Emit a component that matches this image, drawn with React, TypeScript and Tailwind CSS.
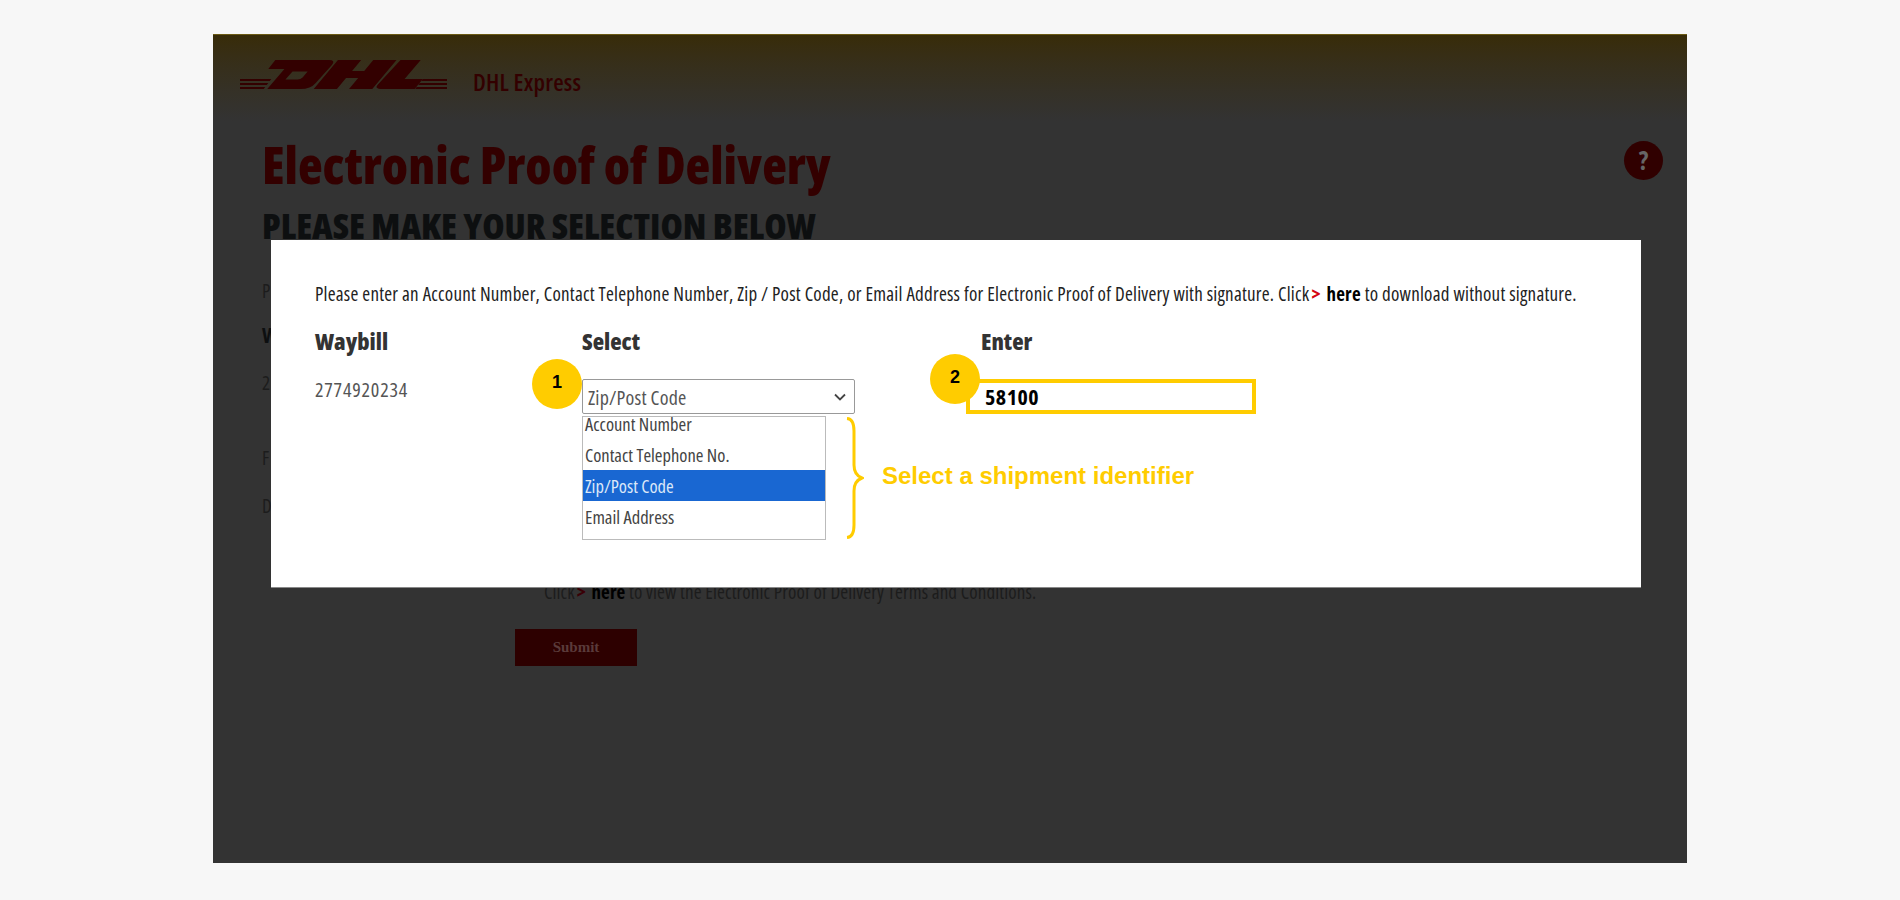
const sans = "font-['Open_Sans','Noto_Sans',sans-serif] font-stretch-[75%]";

const DhlLogo = () => (
    <svg viewBox="0 0 205 29" className="w-[207px] h-[29px] shrink-0" preserveAspectRatio="none" fill="#330000">
        <path fillRule="evenodd" d="M35 0 H88 Q95 0 91 5 L75 23 Q70 29 60 29 H27 L44 9 H28 Z M52 11.500 L45 19.500 H57 Q60 19.500 62 17.500 L67 11.500 Z" />
        <path d="M97 0 H120 L111 11 H123 L132 0 H155 L131 29 H108 L117 18 H105 L96 29 H73 Z" />
        <path d="M159 0 H179 L163 19 H181 L173 29 H141 Q132 29 137 24 Z" />
        <path d="M0 19 H31 L29.500 21 H0 Z M0 23 H28 L26.500 25 H0 Z M0 27 H25 L23.500 29 H0 Z" />
        <path d="M181 19 H205 V21 H179.500 Z M178 23 H205 V25 H176.500 Z M175 27 H205 V29 H173.500 Z" />
    </svg>
);

const Badge = ({ n, className }: { n: string; className: string }) => (
    <div className={`absolute w-[50px] h-[50px] rounded-full bg-[#ffcc00] flex items-center justify-center font-['Liberation_Sans',sans-serif] font-bold text-[18px] text-black ${className}`}>
        <span className="-mt-1">{n}</span>
    </div>
);

const options = ['Account Number', 'Contact Telephone No.', 'Zip/Post Code', 'Email Address'];

const Modal = () => (
    <div className="absolute left-[58px] top-[205px] w-[1370px] h-[348px] bg-white border-b border-[#888] px-[44px] pt-[43px]">
        <p className={`${sans} text-[19px] leading-[22px] tracking-[0.24px] text-[#222] whitespace-nowrap`}>
            Please enter an Account Number, Contact Telephone Number, Zip / Post Code, or Email Address for Electronic Proof of Delivery with signature. Click<span className="text-[#d40511] font-bold mx-[2px]">&gt;</span> <b className="text-black">here</b> to download without signature.
        </p>
        <div className="mt-[22px] flex relative">
            <div className="w-[267px] shrink-0">
                <div className={`${sans} font-extrabold text-[23.5px] leading-[28px] text-[#333]`}>Waybill</div>
                <div className={`${sans} text-[20px] leading-[24px] tracking-[0.8px] text-[#555] mt-[23px]`}>2774920234</div>
            </div>
            <div className="w-[399px] shrink-0">
                <div className={`${sans} font-extrabold text-[23.5px] leading-[28px] text-[#333]`}>Select</div>
                <div className="mt-[24px] w-[273px] h-[35px] border border-[#999] rounded-[2px] flex items-center justify-between pl-[5px] pr-[8px]">
                    <span className={`${sans} text-[20px] tracking-[0.2px] text-[#555] mt-[2px]`}>Zip/Post Code</span>
                    <svg viewBox="0 0 12 8" className="w-[12px] h-[8px]" fill="none" stroke="#444" strokeWidth="1.800">
                        <path d="M1 1.500 L6 6.500 L11 1.500" />
                    </svg>
                </div>
                <ul className="mt-[2px] w-[244px] h-[124px] border border-[#bbb] bg-white">
                    {options.map((o, i) => (
                        <li key={o} className={`h-[31px] pl-[2px] flex items-center ${sans} text-[18.500px] ${i === 0 ? '-mt-[9px]' : ''} ${i === 2 ? 'bg-[#1967d2] text-[#dce8f8]' : 'text-[#444]'}`}>
                            {o}
                        </li>
                    ))}
                </ul>
            </div>
            <div className="w-[290px] shrink-0">
                <div className={`${sans} font-extrabold text-[23.5px] leading-[28px] text-[#333]`}>Enter</div>
                <div className={`mt-[24px] -ml-[15px] w-[290px] h-[35px] border-[4px] border-[#ffcc00] flex items-center pl-[15px] ${sans} font-bold text-[22px] tracking-[0.5px] text-black`}>
                    58100
                </div>
            </div>
            <Badge n="1" className="left-[217px] top-[32px]" />
            <Badge n="2" className="left-[615px] top-[27px]" />
            <svg viewBox="0 0 18 122" className="absolute left-[531px] top-[90px] w-[18px] h-[122px]" fill="none" stroke="#ffcc00" strokeWidth="3">
                <path d="M1 1.500 Q8 2 8 14 V48 Q8 58 16 61 Q8 64 8 74 V108 Q8 120 1 120.500" />
            </svg>
            <div className="absolute left-[567px] top-[135px] font-['Liberation_Sans',sans-serif] font-bold text-[24px] leading-[28px] text-[#ffcc00] whitespace-nowrap">
                Select a shipment identifier
            </div>
        </div>
    </div>
);

export default function App() {
    return (
        <div className="min-h-[900px] bg-[#f7f7f7] pl-[213px] pt-[34px]">
            <div className="relative w-[1474px] h-[829px] bg-[#333] border-t border-[#6b5a14] overflow-hidden">
                <div className="h-[86px] bg-gradient-to-b from-[#382c08] to-[#333] pl-[27px] pt-[25px] flex items-start">
                    <DhlLogo />
                    <span className={`${sans} ml-[26px] mt-[10px] text-[24px] leading-[24px] tracking-[0.2px] font-semibold text-[#330000]`}>DHL Express</span>
                </div>
                <div className="relative px-[49px]">
                    <h1 className={`${sans} font-extrabold text-[51px] leading-[60px] text-[#330000] mt-[13px]`}>Electronic Proof of Delivery</h1>
                    <h2 className={`${sans} font-extrabold text-[36px] leading-[40px] text-[#0d0f10] mt-[12px]`}>PLEASE MAKE YOUR SELECTION BELOW</h2>
                    <div className={`${sans} text-[19px] text-[#1c1c1c]`}>
                        <p className="mt-[33px] leading-[24px]">P</p>
                        <p className="mt-[20px] leading-[24px] font-bold text-[21px] text-[#0d0f10]">W</p>
                        <p className="mt-[24px] leading-[24px]">2</p>
                        <p className="mt-[51px] leading-[24px]">F</p>
                        <p className="mt-[24px] leading-[24px]">D</p>
                    </div>
                    <div className="pl-[282px] mt-[63px]">
                        <p className={`${sans} text-[19px] leading-[22px] tracking-[0.11px] text-[#1c1c1c]`}>
                            Click<span className="text-[#3a0006] font-bold mx-[2px]">&gt;</span> <b className="text-black">here</b> to view the Electronic Proof of Delivery Terms and Conditions.
                        </p>
                    </div>
                    <button type="button" className="block ml-[253px] mt-[26px] w-[122px] h-[37px] bg-[#2d0000] font-['Liberation_Serif',serif] font-bold text-[15px] text-[#5a3a3a]">
                        Submit
                    </button>
                </div>
                <div className={`absolute left-[1411px] top-[106px] w-[39px] h-[39px] rounded-full bg-[#300000] flex items-center justify-center ${sans} font-bold text-[26px] text-[#666]`}>
                    ?
                </div>
                <Modal />
            </div>
        </div>
    );
}
